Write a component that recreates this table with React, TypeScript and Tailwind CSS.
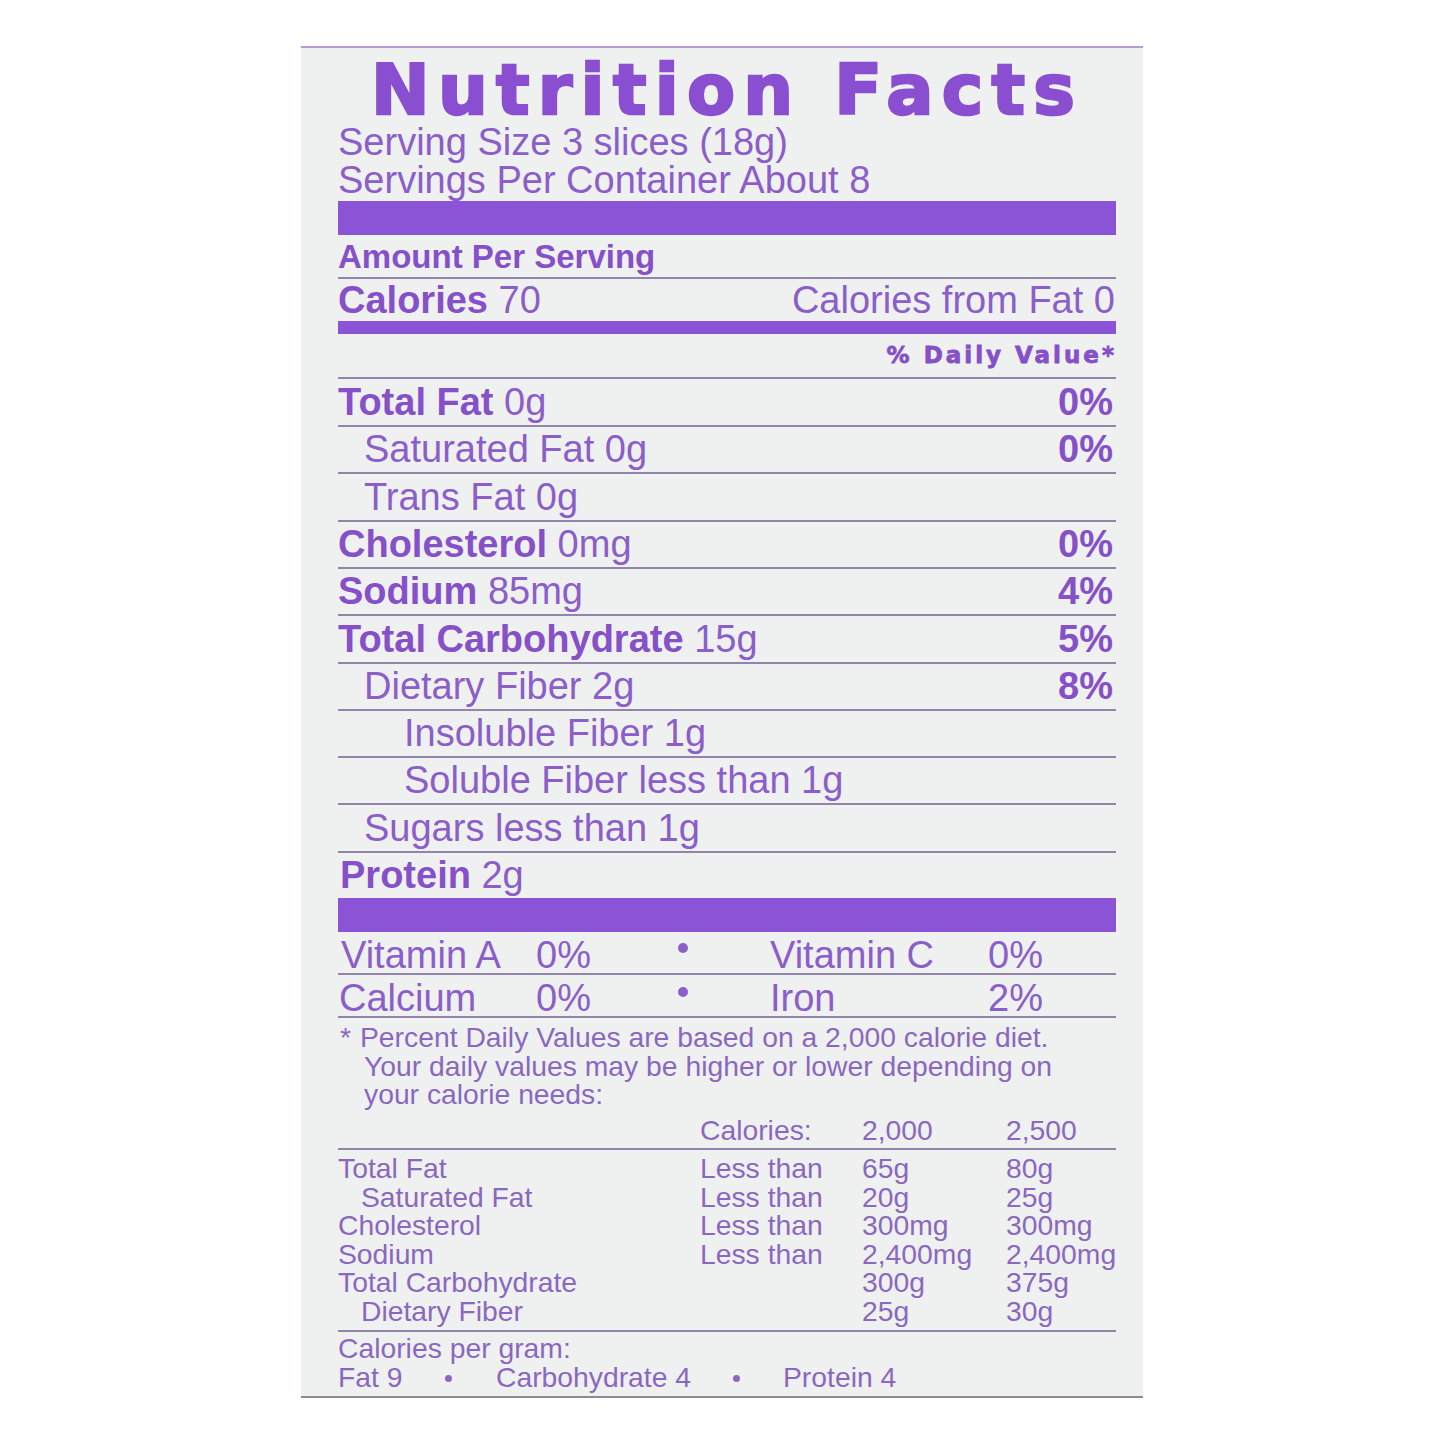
const rows = [
  { label: 'Total Fat', bold: true, value: '0g', pct: '0%', indent: 'pl-0', h: 'h-[46px] leading-[46px]' },
  { label: 'Saturated Fat', bold: false, value: '0g', pct: '0%', indent: 'pl-[26px]', h: 'h-[45px] leading-[45px]' },
  { label: 'Trans Fat', bold: false, value: '0g', pct: '', indent: 'pl-[26px]', h: 'h-[46px] leading-[46px]' },
  { label: 'Cholesterol', bold: true, value: '0mg', pct: '0%', indent: 'pl-0', h: 'h-[45px] leading-[45px]' },
  { label: 'Sodium', bold: true, value: '85mg', pct: '4%', indent: 'pl-0', h: 'h-[45px] leading-[45px]' },
  { label: 'Total Carbohydrate', bold: true, value: '15g', pct: '5%', indent: 'pl-0', h: 'h-[46px] leading-[46px]' },
  { label: 'Dietary Fiber', bold: false, value: '2g', pct: '8%', indent: 'pl-[26px]', h: 'h-[45px] leading-[45px]' },
  { label: 'Insoluble Fiber', bold: false, value: '1g', pct: '', indent: 'pl-[66px]', h: 'h-[45px] leading-[45px]' },
  { label: 'Soluble Fiber', bold: false, value: 'less than 1g', pct: '', indent: 'pl-[66px]', h: 'h-[45px] leading-[45px]' },
  { label: 'Sugars', bold: false, value: 'less than 1g', pct: '', indent: 'pl-[26px]', h: 'h-[46px] leading-[46px]' },
]

const limits = [
  { name: 'Total Fat', sub: false, less: 'Less than', a: '65g', b: '80g' },
  { name: 'Saturated Fat', sub: true, less: 'Less than', a: '20g', b: '25g' },
  { name: 'Cholesterol', sub: false, less: 'Less than', a: '300mg', b: '300mg' },
  { name: 'Sodium', sub: false, less: 'Less than', a: '2,400mg', b: '2,400mg' },
  { name: 'Total Carbohydrate', sub: false, less: '', a: '300g', b: '375g' },
  { name: 'Dietary Fiber', sub: true, less: '', a: '25g', b: '30g' },
]

function Bar({ h }: { h: string }) {
  return <div className={`${h} w-full bg-[#8b53d6]`} />
}

function Dot({ size, top }: { size: string; top: string }) {
  return <div className={`${size} ${top} shrink-0 rounded-full bg-[#8b5ec9]`} />
}

export default function App() {
  return (
    <div className="min-h-[1445px] bg-white pl-[301px] pt-[46px] font-['Liberation_Sans',Arial,sans-serif]">
      <div className="h-[1352px] w-[842px] border-t-2 border-b-2 border-t-[#b79ad8] border-b-[#8d8a92] bg-[#eff1f0] pl-[37px] pr-[27px] pt-[10px]">
        {/* header */}
        <h1 className="ml-[33px] h-[65px] whitespace-nowrap font-['DejaVu_Sans',sans-serif] text-[70px] font-bold leading-[65px] tracking-[8.3px] text-[#8a4fd1] [-webkit-text-stroke:2.5px_#8a4fd1]">
          Nutrition Facts
        </h1>
        <div className="text-[38px] leading-[38px] text-[#8b5ec9]">
          <div>Serving Size 3 slices (18g)</div>
          <div>Servings Per Container About 8</div>
        </div>
        <div className="mt-[2px]">
          <Bar h="h-[34px]" />
        </div>

        <div className="h-[44px] border-b-2 border-[#9384ad] text-[33px] font-bold leading-[43px] text-[#8650c8]">
          Amount Per Serving
        </div>
        <div className="flex h-[42px] items-start justify-between text-[38px] leading-[42px] text-[#8b5ec9]">
          <div>
            <span className="font-bold text-[#8650c8]">Calories</span> 70
          </div>
          <div className="pr-[1px]">Calories from Fat 0</div>
        </div>
        <Bar h="h-[13px]" />
        <div className="flex h-[45px] justify-end border-b-2 border-[#9384ad]">
          <span className="mr-[-1px] font-['DejaVu_Sans',sans-serif] text-[23px] font-bold leading-[42px] tracking-[3px] text-[#8650c8] [-webkit-text-stroke:0.8px_#8650c8]">
            % Daily Value*
          </span>
        </div>

        {/* nutrients */}
        {rows.map((r) => (
          <div key={r.label} className="border-b-2 border-[#9384ad]">
            <div className={`flex items-start justify-between ${r.h} ${r.indent} text-[38px] text-[#8b5ec9]`}>
              <div className="whitespace-nowrap">
                {r.bold ? <span className="font-bold text-[#8650c8]">{r.label}</span> : r.label} {r.value}
              </div>
              {r.pct && <div className="pr-[3px] font-bold text-[#8650c8]">{r.pct}</div>}
            </div>
          </div>
        ))}
        <div className="h-[45px] pl-[2px] text-[38px] leading-[45px] text-[#8b5ec9]">
          <span className="font-bold text-[#8650c8]">Protein</span> 2g
        </div>
        <Bar h="h-[34px]" />

        {/* vitamins */}
        <div className="h-[43px] border-b-2 border-[#9384ad]">
          <div className="flex h-[41px] items-start text-[38px] leading-[46px] text-[#8b5ec9]">
            <div className="w-[198px] pl-[3px]">Vitamin A</div>
            <div className="w-[142px]">0%</div>
            <Dot size="h-[10px] w-[10px]" top="mt-[11px]" />
            <div className="w-[82px] shrink-0" />
            <div className="w-[218px]">Vitamin C</div>
            <div>0%</div>
          </div>
        </div>
        <div className="h-[43px] border-b-2 border-[#9384ad]">
          <div className="flex h-[41px] items-start text-[38px] leading-[46px] text-[#8b5ec9]">
            <div className="w-[198px] pl-[1px]">Calcium</div>
            <div className="w-[142px]">0%</div>
            <Dot size="h-[10px] w-[10px]" top="mt-[12px]" />
            <div className="w-[82px] shrink-0" />
            <div className="w-[218px]">Iron</div>
            <div>2%</div>
          </div>
        </div>

        {/* footnote */}
        <div className="pl-[2px] pt-[5px] text-[28.3px] leading-[28.5px] text-[#8b68bf]">
          <div className="flex">
            <span className="w-[20px]">*</span>
            <span>Percent Daily Values are based on a 2,000 calorie diet.</span>
          </div>
          <div className="pl-[24px]">Your daily values may be higher or lower depending on</div>
          <div className="pl-[24px]">your calorie needs:</div>
        </div>

        <div className="mt-[7.5px] text-[28.3px] leading-[28.5px] text-[#8b68bf]">
          <div className="grid h-[34px] grid-cols-[362px_162px_144px_1fr] border-b-2 border-[#9384ad]">
            <div />
            <div>Calories:</div>
            <div>2,000</div>
            <div>2,500</div>
          </div>
          <div className="border-b-2 border-[#9384ad] pb-[5px] pt-[4px]">
            {limits.map((l) => (
              <div key={l.name} className="grid grid-cols-[362px_162px_144px_1fr]">
                <div className={l.sub ? 'pl-[23px]' : ''}>{l.name}</div>
                <div>{l.less}</div>
                <div>{l.a}</div>
                <div>{l.b}</div>
              </div>
            ))}
          </div>
          <div className="pt-[2px]">
            <div>Calories per gram:</div>
            <div className="flex items-start">
              <span className="w-[107px] shrink-0">Fat 9</span>
              <div className="h-[7px] w-[7px] mt-[12px] shrink-0 rounded-full bg-[#8b68bf]" />
              <div className="w-[44px] shrink-0" />
              <span className="w-[237px] shrink-0">Carbohydrate 4</span>
              <div className="h-[7px] w-[7px] mt-[12px] shrink-0 rounded-full bg-[#8b68bf]" />
              <div className="w-[43px] shrink-0" />
              <span>Protein 4</span>
            </div>
          </div>
        </div>
      </div>
    </div>
  )
}
